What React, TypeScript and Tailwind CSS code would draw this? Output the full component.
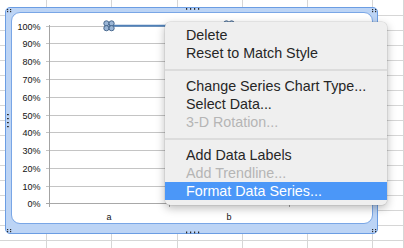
import React from "react";

const colWidths = [47, 65, 66, 65, 65, 65, 31];
const rowHeights = [16, 15, 15, 15, 15, 15, 15, 15, 15, 15, 15, 15, 15, 15, 15, 15, 16];

function Sheet() {
  return (
    <div className="flex flex-col">
      {rowHeights.map((h, r) => (
        <div key={r} className="flex" style={{ height: h }}>
          {colWidths.map((w, c) => (
            <div
              key={c}
              className="border-r border-b border-[#d6d6d6] bg-white"
              style={{ width: w, height: h }}
            />
          ))}
        </div>
      ))}
    </div>
  );
}

const yVals = [0, 10, 20, 30, 40, 50, 60, 70, 80, 90, 100];

function Marker({ x, y }: { x: number; y: number }) {
  return (
    <g>
      {[
        [-2.6, -2.4],
        [2.6, -2.4],
        [-2.6, 2.4],
        [2.6, 2.4],
      ].map(([dx, dy], i) => (
        <circle key={i} cx={x + dx} cy={y + dy} r={2.6} fill="#9bb6d6" stroke="#3d5f86" strokeWidth={0.9} />
      ))}
    </g>
  );
}

function Chart() {
  const gy = (k: number) => 203.3 - k * 17.76;
  return (
    <svg
      className="absolute left-0 top-0"
      width={404}
      height={248}
      viewBox="0 0 404 248"
      style={{ pointerEvents: "none" }}
    >
      {yVals.map((v, k) => {
        const y = Math.round(gy(k)) + 0.5;
        return (
          <g key={v}>
            <line x1={46} x2={289} y1={y} y2={y} stroke={k === 0 ? "#a8a8a8" : "#c4c4c4"} strokeWidth={1.2} />
            <text
              x={40.5}
              y={y + 3.2}
              textAnchor="end"
              fontSize={9}
              fontFamily="'Liberation Sans', Arial, sans-serif"
              fill="#111"
            >
              {v}%
            </text>
          </g>
        );
      })}
      <line x1={49.5} x2={49.5} y1={25} y2={207} stroke="#a3a3a3" strokeWidth={1} />
      <line x1={169.5} x2={169.5} y1={203} y2={207} stroke="#a3a3a3" strokeWidth={1} />
      <line x1={289.5} x2={289.5} y1={203} y2={207} stroke="#a3a3a3" strokeWidth={1} />
      <text x={109} y={220} textAnchor="middle" fontSize={9} fontFamily="'Liberation Sans', Arial, sans-serif" fill="#111">
        a
      </text>
      <text x={229} y={220} textAnchor="middle" fontSize={9} fontFamily="'Liberation Sans', Arial, sans-serif" fill="#111">
        b
      </text>
      <line x1={109} x2={229} y1={25.8} y2={25.8} stroke="#4f80b8" strokeWidth={2} />
      <Marker x={109} y={25.8} />
      <Marker x={229} y={25.8} />
      {/* handles */}
      <g fill="#2a2a2a">
        {[
          [7, 9],
          [10, 9],
          [7, 11],
          [10, 11],
          [372, 9],
          [375, 9],
          [372, 11],
          [375, 11],
          [7, 229],
          [10, 229],
          [7, 231],
          [10, 231],
          [372, 229],
          [375, 229],
          [372, 231],
          [375, 231],
        ].map(([x, y], i) => (
          <rect key={i} x={x} y={y} width={1.2} height={1.2} />
        ))}
        {[186, 190, 194, 198].map((x) => (
          <rect key={"t" + x} x={x} y={8} width={1.2} height={1.8} />
        ))}
        {[186, 190, 194, 198].map((x) => (
          <rect key={"b" + x} x={x} y={231.5} width={1.2} height={1.8} />
        ))}
        {[114, 118, 122, 126].map((y) => (
          <rect key={"l" + y} x={7} y={y} width={1.8} height={1.2} />
        ))}
      </g>
    </svg>
  );
}

type Item = { label: string; disabled?: boolean; active?: boolean } | "sep";

const items: Item[] = [
  { label: "Delete" },
  { label: "Reset to Match Style" },
  "sep",
  { label: "Change Series Chart Type..." },
  { label: "Select Data..." },
  { label: "3-D Rotation...", disabled: true },
  "sep",
  { label: "Add Data Labels" },
  { label: "Add Trendline...", disabled: true },
  { label: "Format Data Series...", active: true },
];

function Menu() {
  return (
    <div
      className="absolute left-[165px] top-[22px] w-[222px] h-[183px] rounded-[5px] bg-[#efefef] pt-[4px] shadow-[0_3px_10px_rgba(0,0,0,0.28),0_0_0_0.5px_rgba(0,0,0,0.12)]"
      style={{ fontFamily: "'Liberation Sans', Arial, sans-serif" }}
    >
      {items.map((it, i) =>
        it === "sep" ? (
          <div key={i} className="mt-[7px] mb-[6px] h-[2px] bg-[#dcdcdc]" />
        ) : (
          <div
            key={i}
            className={
              "h-[18px] leading-[18px] pl-[21px] text-[14.3px] whitespace-nowrap " +
              (it.active ? "bg-[#4b97f8] text-white" : it.disabled ? "text-[#b5b5b5]" : "text-[#262626]")
            }
          >
            {it.label}
          </div>
        )
      )}
    </div>
  );
}

export default function App() {
  return (
    <div className="relative w-[404px] h-[248px] overflow-hidden bg-white">
      <Sheet />
      <div className="absolute left-[5px] top-[7px] w-[373px] h-[227px] rounded-[5px] border border-[#6b9de3] bg-[#bcd4f5] pt-[4px] pl-[5px] pr-[4px] pb-[9px]">
        <div className="h-full w-full rounded-[9px] border border-[#79a6e6] bg-white" />
      </div>
      <Chart />
      <Menu />
    </div>
  );
}
